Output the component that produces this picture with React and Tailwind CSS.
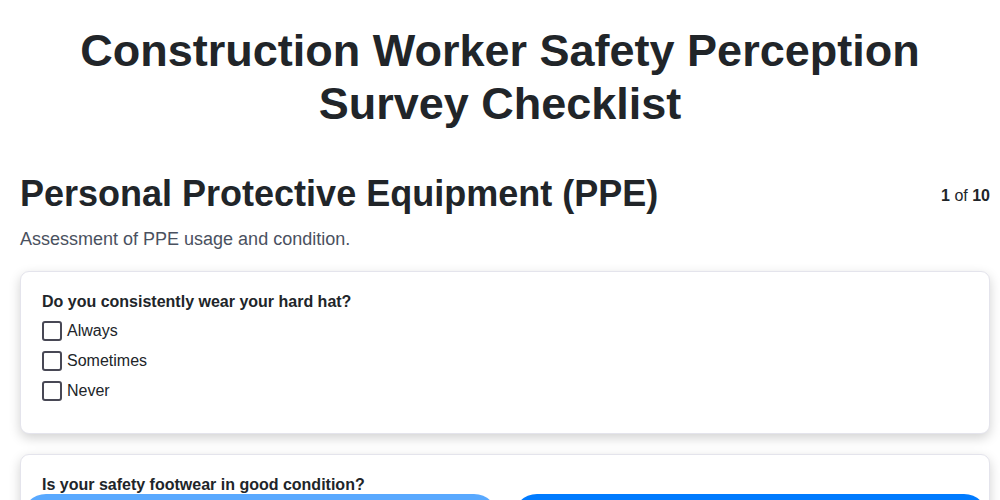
const questions = [
  { q: 'Do you consistently wear your hard hat?', options: ['Always', 'Sometimes', 'Never'] },
  { q: 'Is your safety footwear in good condition?', options: ['Yes', 'No', 'Not sure'] },
];

const Option = ({ label }) => (
  <label className="flex items-center gap-[5px] h-[30px]">
    <span className="w-5 h-5 border-2 border-[#484855] rounded-[3px] bg-white shrink-0" />
    <span className="text-base text-[#212529]">{label}</span>
  </label>
);

const App = () => {
  return (
    <div className="min-h-screen bg-white font-['Liberation_Sans',Arial,sans-serif] text-[#212529]">
      <h1 className="text-[45px] leading-[53px] font-bold text-center pt-[24px] px-10">
        Construction Worker Safety Perception Survey Checklist
      </h1>
      <div className="pl-5 pr-[10px] mt-[42px]">
        <div className="flex justify-between items-start">
          <h2 className="text-[36px] leading-[44px] font-bold">Personal Protective Equipment (PPE)</h2>
          <div className="text-base mt-[12px]">
            <span className="font-bold">1</span> of <span className="font-bold">10</span>
          </div>
        </div>
        <p className="text-[18px] text-[#4a5160] mt-[10px]">Assessment of PPE usage and condition.</p>
        <div className="mt-[18px] flex flex-col gap-[20px]">
          {questions.map((item) => (
            <div
              key={item.q}
              className="bg-white border border-[#e4e4ec] rounded-[9px] shadow-[0_4px_12px_rgba(0,0,0,0.18)] pt-[18px] pb-[27px] pl-[21px] pr-5"
            >
              <div className="font-bold text-base mb-[2px]">{item.q}</div>
              {item.options.map((o) => (
                <Option key={o} label={o} />
              ))}
            </div>
          ))}
        </div>
      </div>
      <div className="fixed left-0 right-0 top-[494px] flex gap-[15px] px-[22px] pr-[12px]">
        <button className="flex-1 h-12 rounded-full bg-[#007bff] opacity-65 text-white text-base">Previous</button>
        <button className="flex-1 h-12 rounded-full bg-[#007bff] text-white text-base">Next</button>
      </div>
    </div>
  );
};

export default App;
